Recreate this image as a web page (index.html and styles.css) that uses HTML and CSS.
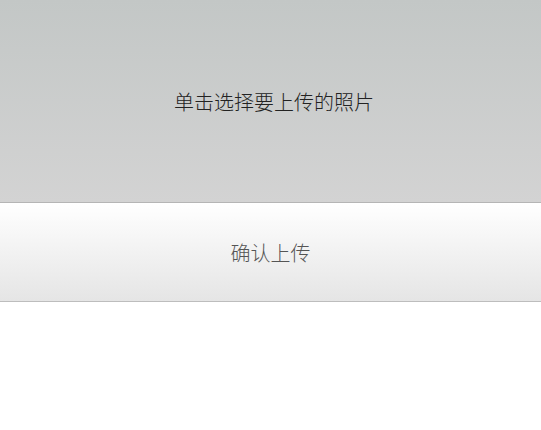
FILE: index.html
```html
<!DOCTYPE html>
<html lang="zh">
<head>
<meta charset="utf-8">
<link rel="stylesheet" href="styles.css">
</head>
<body>
<div class="page">
  <div class="picker">单击选择要上传的照片</div>
  <div class="confirm">确认上传</div>
</div>
</body>
</html>
```
FILE: styles.css
```css
html, body { margin: 0; padding: 0; background: #fff; }
body { font-family: "Noto Sans CJK SC", "Liberation Sans", sans-serif; }
.page { display: flex; flex-direction: column; }
.picker {
  height: 202px;
  padding-left: 7px;
  display: flex; align-items: center; justify-content: center;
  background: linear-gradient(to bottom, #c3c7c6, #d3d3d3);
  border-bottom: 1px solid #b5b5b5;
  color: #222;
  font-size: 20px;
  font-weight: 300;
}
.confirm {
  height: 98px;
  display: flex; align-items: center; justify-content: center;
  background: linear-gradient(to bottom, #ffffff, #e5e5e5);
  border-bottom: 1px solid #bdbdbd;
  color: #555;
  font-size: 20px;
  font-weight: 300;
}
```
